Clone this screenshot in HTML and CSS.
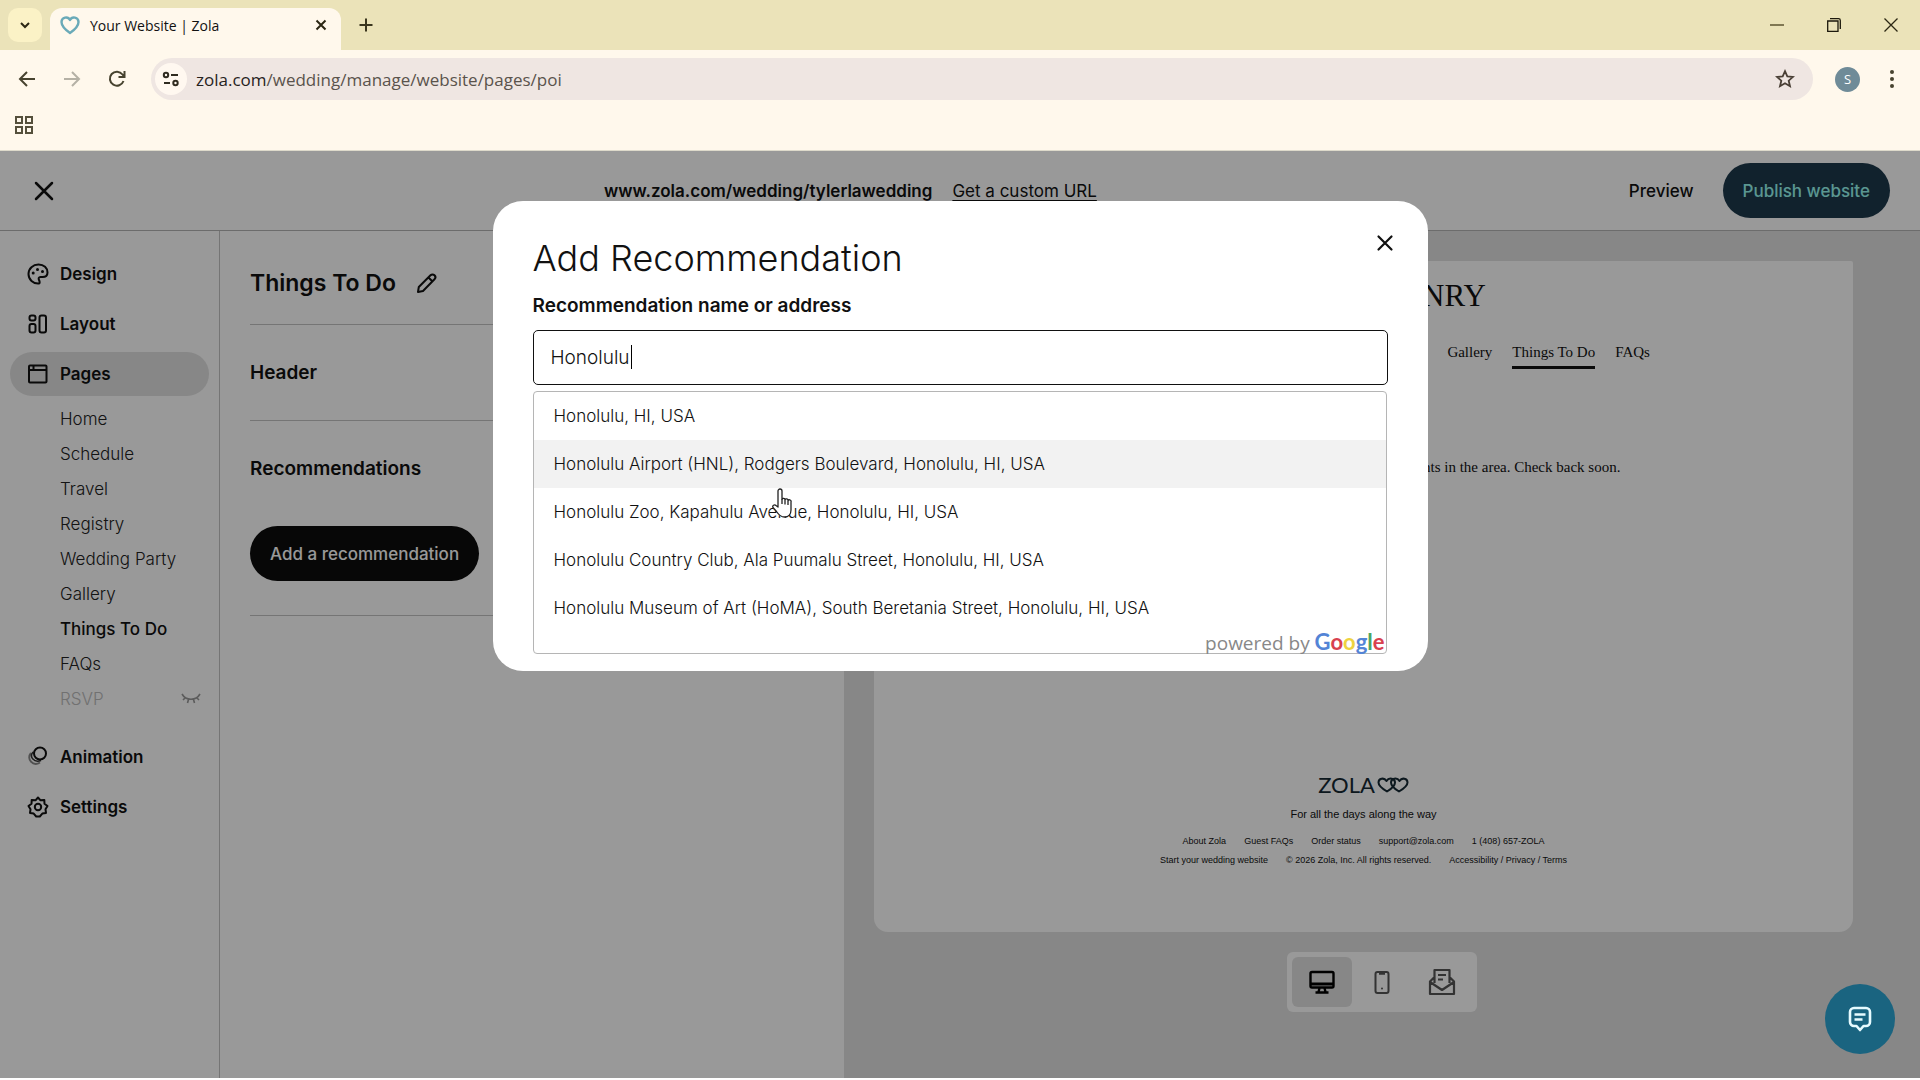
FILE: index.html
```html
<!DOCTYPE html>
<html lang="en">
<head>
    <meta charset="UTF-8">
    <meta name="viewport" content="width=device-width, initial-scale=1.0">
    <title>Your Website | Zola</title>
    <link rel="stylesheet" href="styles.css">
</head>
<body>
    <div class="browser">
        <div class="tab-strip">
            <button class="tab-search" aria-label="Search tabs">
                <svg width="12" height="12" viewBox="0 0 12 12"><path d="M2 4l4 4 4-4" fill="none" stroke="#2b2713" stroke-width="2"/></svg>
            </button>
            <div class="tab">
                <svg width="20" height="20" viewBox="0 0 20 20"><path d="M10 18C5 14.500 1.500 11 1.500 7a4.500 4.500 0 0 1 8.500-2 4.500 4.500 0 0 1 8.500 2c0 4-3.500 7.500-8.500 11z" fill="none" stroke="#6aaab8" stroke-width="2.400" stroke-linejoin="round"/></svg>
                <span class="tab-title">Your Website | Zola</span>
                <button class="icon-btn" aria-label="Close tab">
                    <svg width="12" height="12" viewBox="0 0 12 12"><path d="M1.500 1.500l9 9M10.500 1.500l-9 9" stroke="#2b2713" stroke-width="2"/></svg>
                </button>
            </div>
            <button class="icon-btn new-tab" aria-label="New tab">
                <svg width="14" height="14" viewBox="0 0 14 14"><path d="M7 0.500v13M0.500 7h13" stroke="#3b361e" stroke-width="2"/></svg>
            </button>
            <div class="window-buttons">
                <button class="icon-btn" aria-label="Minimize"><svg width="14" height="14" viewBox="0 0 14 14"><path d="M0 7h14" stroke="#5d5532" stroke-width="1.500"/></svg></button>
                <button class="icon-btn" aria-label="Restore"><svg width="14" height="14" viewBox="0 0 14 14"><path d="M0.700 3h10.300v10.300H0.700zM3 0.700h8.500a1.800 1.800 0 0 1 1.800 1.800V11" fill="none" stroke="#1c190c" stroke-width="1.300"/></svg></button>
                <button class="icon-btn" aria-label="Close window"><svg width="14" height="14" viewBox="0 0 14 14"><path d="M0.500 0.500l13 13M13.500 0.500l-13 13" stroke="#2b2713" stroke-width="1.300"/></svg></button>
            </div>
        </div>
        <div class="toolbar">
            <button class="icon-btn" aria-label="Back"><svg width="18" height="18" viewBox="0 0 18 18"><path d="M17 9H2M9 2L2 9l7 7" fill="none" stroke="#47432f" stroke-width="2"/></svg></button>
            <button class="icon-btn" aria-label="Forward"><svg width="18" height="18" viewBox="0 0 18 18"><path d="M1 9h15M9 2l7 7-7 7" fill="none" stroke="#b5b1a5" stroke-width="2"/></svg></button>
            <button class="icon-btn" aria-label="Reload"><svg width="18" height="18" viewBox="0 0 18 18"><path d="M15.500 11A7 7 0 1 1 14.500 4.500L16 6.500M16.500 1v6h-6" fill="none" stroke="#47432f" stroke-width="2"/></svg></button>
            <div class="address">
                <button class="site-info" aria-label="View site information">
                    <svg width="18" height="16" viewBox="0 0 18 16" fill="none" stroke="#2f2b20" stroke-width="2"><circle cx="4" cy="4" r="2.200"/><path d="M9 4h7M2 12h6"/><circle cx="13.500" cy="12" r="2.200"/></svg>
                </button>
                <span class="url"><span class="host">zola.com</span>/wedding/manage/website/pages/poi</span>
                <button class="icon-btn" aria-label="Bookmark this tab"><svg width="20" height="20" viewBox="0 0 20 20"><path d="M10 2.200l2.300 5.200 5.700.500-4.300 3.800 1.300 5.500-5-3-5 3 1.300-5.500L2 7.900l5.700-.500z" fill="none" stroke="#4a4036" stroke-width="1.800"/></svg></button>
            </div>
            <button class="avatar">S</button>
            <button class="icon-btn" aria-label="Browser menu"><svg width="6" height="20" viewBox="0 0 6 20" fill="#47432f"><circle cx="3" cy="3" r="2"/><circle cx="3" cy="10" r="2"/><circle cx="3" cy="17" r="2"/></svg></button>
        </div>
        <div class="bookmarks">
            <button class="icon-btn" aria-label="Apps"><svg width="20" height="20" viewBox="0 0 20 20" fill="none" stroke="#55503c" stroke-width="2"><path d="M2 2h6v6H2zM12 2h6v6h-6zM2 12h6v6H2zM12 12h6v6h-6z"/></svg></button>
        </div>
    </div>

    <div class="page">
        <header class="app-header">
            <button class="exit-btn" aria-label="Exit editor"><svg width="20" height="20" viewBox="0 0 20 20"><path d="M2 2l16 16M18 2L2 18" stroke="#111" stroke-width="2.500" stroke-linecap="round"/></svg></button>
            <div class="site-url">
                <strong>www.zola.com/wedding/tylerlawedding</strong>
                <a href="#">Get a custom URL</a>
            </div>
            <div class="header-actions">
                <button class="preview-btn">Preview</button>
                <button class="publish-btn">Publish website</button>
            </div>
        </header>

        <div class="workspace">
            <nav class="sidebar">
                <a class="nav-item" href="#">
                    <svg width="22" height="22" viewBox="0 0 22 22" fill="none" stroke="#111" stroke-width="2"><path d="M12 20.500C6 21 1.500 16.500 1.500 11S6 1.500 11.500 1.500 20.500 5 20.500 9.500c0 3.500-2.500 4.500-5 4.500h-2c-1.800 0-2.300 1.500-1.500 3s1 3.200 0 3.500z"/><g fill="#111" stroke="none"><circle cx="6.200" cy="10" r="1.500"/><circle cx="10.500" cy="6.500" r="1.500"/><circle cx="15.500" cy="8.500" r="1.500"/></g></svg>
                    Design
                </a>
                <a class="nav-item" href="#">
                    <svg width="22" height="22" viewBox="0 0 22 22" fill="none" stroke="#111" stroke-width="2"><rect x="2.500" y="2.500" width="6" height="5" rx="2"/><rect x="2.500" y="11" width="6" height="8.500" rx="2"/><rect x="12.500" y="2.500" width="6.500" height="17" rx="2"/></svg>
                    Layout
                </a>
                <a class="nav-item active" href="#">
                    <svg width="22" height="22" viewBox="0 0 22 22" fill="none" stroke="#111" stroke-width="2"><rect x="2" y="2.500" width="17.500" height="17" rx="1"/><path d="M2 7h17.500M6.500 3v4"/></svg>
                    Pages
                </a>
                <div class="sub-nav">
                    <a href="#">Home</a>
                    <a href="#">Schedule</a>
                    <a href="#">Travel</a>
                    <a href="#">Registry</a>
                    <a href="#">Wedding Party</a>
                    <a href="#">Gallery</a>
                    <a class="current" href="#">Things To Do</a>
                    <a href="#">FAQs</a>
                    <a class="hidden-page" href="#">RSVP
                        <svg width="20" height="14" viewBox="0 0 20 14" fill="none" stroke="#999" stroke-width="1.600"><path d="M1 2c4 7 14 7 18 0M2 8l2.500-2.500M7.500 7.500L6.500 11M12.500 7.500l1 3.500M18 8l-2.500-2.500"/></svg>
                    </a>
                </div>
                <a class="nav-item" href="#">
                    <svg width="22" height="22" viewBox="0 0 22 22" fill="none" stroke="#111" stroke-width="2"><path d="M4 7c-5 6 2 14 9 9.500" stroke="#888"/><path d="M6 6c-4 5 1 11 8 8.500" stroke="#333" stroke-width="1.500"/><circle cx="13" cy="7.500" r="6"/></svg>
                    Animation
                </a>
                <a class="nav-item" href="#">
                    <svg width="22" height="22" viewBox="0 0 22 22" fill="none" stroke="#111" stroke-width="2" stroke-linejoin="round"><path d="M11 1.500l2.500 2.800 3.800-.400.200 3.800 3 2.300-2 3.300.5 3.700-3.700.600L12.800 20.500H9.200L6.700 17.600 3 17l.500-3.700-2-3.300 3-2.300.200-3.800 3.800.400z"/><circle cx="11" cy="11" r="3.200"/></svg>
                    Settings
                </a>
            </nav>

            <main class="editor">
                <section class="title-section">
                    <h1>Things To Do
                        <button class="icon-btn" aria-label="Edit title"><svg width="22" height="22" viewBox="0 0 22 22" fill="none" stroke="#111" stroke-width="2" stroke-linejoin="round"><path d="M2 20l.8-5L14.500 3.300a2.800 2.800 0 0 1 4 4L7 19zM12.500 5.500l4 4"/></svg></button>
                    </h1>
                </section>
                <section>
                    <h2>Header</h2>
                </section>
                <section>
                    <h2>Recommendations</h2>
                    <button class="add-btn">Add a recommendation</button>
                </section>
            </main>

            <div class="preview">
                <div class="canvas">
                    <div class="couple">TYLER &amp; HENRY</div>
                    <nav class="site-nav">
                        <a href="#">Home</a>
                        <a href="#">Schedule</a>
                        <a href="#">Travel</a>
                        <a href="#">Registry</a>
                        <a href="#">Wedding Party</a>
                        <a href="#">Gallery</a>
                        <a class="current" href="#">Things To Do</a>
                        <a href="#">FAQs</a>
                    </nav>
                    <p class="empty-note">We're still adding favorite restaurants, sights and events in the area. Check back soon.</p>
                    <footer class="site-footer">
                        <div class="logo">ZOLA
                            <svg width="32" height="16" viewBox="0 0 32 16" fill="none" stroke="#152833" stroke-width="2" stroke-linejoin="round"><path d="M10 14.500C5 11.500 1.500 9 1.500 5.500c0-4 5.500-5.500 8-1.500 2.500-4 8.500-2.500 8.500 1.500 0 3.500-3 6-8 9z"/><path d="M22 14.500c-5-3-8-5.500-8-9 0-4 6-5.500 8.500-1.500 2.500-4 8-2.500 8 1.500 0 3.500-3.500 6-8.500 9z"/></svg>
                        </div>
                        <div class="tagline">For all the days along the way</div>
                        <div class="footer-links">
                            <a href="#">About Zola</a>
                            <a href="#">Guest FAQs</a>
                            <a href="#">Order status</a>
                            <a href="#">support@zola.com</a>
                            <span>1 (408) 657-ZOLA</span>
                        </div>
                        <div class="footer-links">
                            <a href="#">Start your wedding website</a>
                            <span>© 2026 Zola, Inc. All rights reserved.</span>
                            <span>Accessibility / Privacy / Terms</span>
                        </div>
                    </footer>
                </div>
                <div class="devices">
                    <button class="on" aria-label="Desktop"><svg width="28" height="28" viewBox="0 0 28 28" fill="none" stroke="#000" stroke-width="2.400"><rect x="2.500" y="4" width="23" height="15.500" rx="1.500"/><path d="M3 16h22" stroke-width="3"/><path d="M11.500 20l-1 4M16.500 20l1 4M7.500 24.500h13"/></svg></button>
                    <button aria-label="Mobile"><svg width="28" height="28" viewBox="0 0 28 28" fill="none" stroke="#555" stroke-width="2"><rect x="7.500" y="4" width="13" height="21" rx="2"/><path d="M11 5.500h6" stroke-width="2.500"/><circle cx="14" cy="20.500" r="1" fill="#555" stroke="none"/></svg></button>
                    <button aria-label="Invitation"><svg width="28" height="28" viewBox="0 0 28 28" fill="none" stroke="#555" stroke-width="2.200" stroke-linejoin="round"><path d="M6.500 15V2h15v13M6.500 9L2 13.500V26h24V13.500L21.500 9M2 14l12 8 12-8M10 7h8M10 11.500h5"/></svg></button>
                </div>
            </div>
        </div>

        <div class="overlay">
            <div class="modal" role="dialog" aria-labelledby="modalTitle">
                <button class="icon-btn modal-close" aria-label="Close"><svg width="18" height="18" viewBox="0 0 18 18"><path d="M2.500 2.500l13 13M15.500 2.500l-13 13" stroke="#111" stroke-width="2.200" stroke-linecap="round"/></svg></button>
                <h2 id="modalTitle">Add Recommendation</h2>
                <label for="place">Recommendation name or address</label>
                <div class="place-field">
                    <input type="text" id="place" value="Honolulu" autocomplete="off">
                    <span class="caret"></span>
                    <div class="suggestions">
                        <ul>
                            <li>Honolulu, HI, USA</li>
                            <li class="hover">Honolulu Airport (HNL), Rodgers Boulevard, Honolulu, HI, USA</li>
                            <li>Honolulu Zoo, Kapahulu Avenue, Honolulu, HI, USA</li>
                            <li>Honolulu Country Club, Ala Puumalu Street, Honolulu, HI, USA</li>
                            <li>Honolulu Museum of Art (HoMA), South Beretania Street, Honolulu, HI, USA</li>
                        </ul>
                        <div class="powered">powered by <span class="google"><span class="b">G</span><span class="r">o</span><span class="y">o</span><span class="b">g</span><span class="g">l</span><span class="r">e</span></span></div>
                        <svg class="pointer" width="20" height="30" viewBox="0 0 20 30" fill="#fff" stroke="#222" stroke-width="1.300" stroke-linejoin="round"><path d="M6 19V3a2 2 0 0 1 4 0v8a1.700 1.700 0 0 1 3 .500 1.700 1.700 0 0 1 3 1 1.700 1.700 0 0 1 3 1.500V22c0 4-2.500 7-6.500 7-4 0-6-2.500-8-5.500L1 19.500c-1-2 1.500-3.500 3-2z"/><path d="M10 11v5M13 12v4.500M16 13v4" fill="none"/></svg>
                    </div>
                </div>
            </div>
        </div>

        <button class="chat" aria-label="Chat with us"><svg width="24" height="28" viewBox="0 0 24 28" fill="none" stroke="#e6fbff" stroke-width="2.600" stroke-linejoin="round"><path d="M6 3h12a4 4 0 0 1 4 4v10a4 4 0 0 1-4 4h-2.500L12 25l-3.500-4H6a4 4 0 0 1-4-4V7a4 4 0 0 1 4-4z"/><path d="M6.500 9.500h11M6.500 14.500h8"/></svg></button>
    </div>
</body>
</html>
```

FILE: styles.css
```css
* {
    box-sizing: border-box;
}
body {
    margin: 0;
    height: 100vh;
    display: flex;
    flex-direction: column;
    padding-bottom: 2px;
    background-color: #fff;
    font-family: Inter, "Liberation Sans", sans-serif;
    font-size: 17px;
    color: #111;
}
button, input {
    font: inherit;
    color: inherit;
}
button {
    border: 0;
    padding: 0;
    background: none;
    cursor: pointer;
}
a {
    color: inherit;
    text-decoration: none;
}
h1, h2, p, ul {
    margin: 0;
    padding: 0;
}
svg {
    display: block;
    flex: none;
}

/* browser window */
.browser {
    font-family: "Open Sans", "Noto Sans", sans-serif;
    background-color: #fff8ec;
    height: 151px;
    border-bottom: 1px solid #dedacb;
}
.tab-strip {
    display: flex;
    align-items: flex-end;
    height: 50px;
    padding-left: 8px;
    background-color: #ebe3b9;
}
.tab-search {
    display: flex;
    align-items: center;
    justify-content: center;
    width: 34px;
    height: 34px;
    margin-bottom: 8px;
    border-radius: 10px;
    background-color: #fbf2c6;
}
.tab {
    display: flex;
    align-items: center;
    gap: 10px;
    width: 291px;
    height: 42px;
    margin-left: 8px;
    padding: 0 14px 8px 10px;
    border-radius: 12px 12px 0 0;
    background-color: #fff8ec;
}
.tab-title {
    flex: 1;
    font-size: 14px;
}
.new-tab {
    margin: 0 0 18px 18px;
}
.window-buttons {
    display: flex;
    gap: 43px;
    margin: 0 22px 18px auto;
}
.toolbar {
    display: flex;
    align-items: center;
    gap: 27px;
    height: 58px;
    padding: 0 25px 0 18px;
}
.address {
    flex: 1;
    display: flex;
    align-items: center;
    height: 42px;
    margin: 0 -5px 0 -2px;
    padding: 0 18px 0 4px;
    border-radius: 21px;
    background-color: #efe6e2;
}
.site-info {
    display: flex;
    align-items: center;
    justify-content: center;
    width: 32px;
    height: 32px;
    border-radius: 16px;
    background-color: #fff8f0;
}
.url {
    flex: 1;
    margin-left: 9px;
    font-size: 17px;
    color: #5a534c;
}
.host {
    color: #26221d;
}
.avatar {
    width: 25px;
    height: 25px;
    margin-right: 2px;
    border-radius: 50%;
    background-color: #6f8b98;
    color: #fff;
    font-size: 13px;
}
.bookmarks {
    padding: 7px 14px;
}

/* website editor */
.page {
    position: relative;
    flex: 1;
    display: flex;
    flex-direction: column;
    min-height: 0;
}
.app-header {
    display: flex;
    justify-content: space-between;
    align-items: center;
    height: 80px;
    padding: 0 30px 0 16px;
    border-bottom: 1px solid #b5b5b5;
}
.exit-btn {
    display: flex;
    justify-content: center;
    width: 56px;
}
.site-url {
    display: flex;
    gap: 20px;
}
.site-url strong, .nav-item {
    font-weight: 600;
}
.site-url a {
    text-decoration: underline;
    text-underline-offset: 3px;
}
.header-actions {
    display: flex;
    gap: 29px;
    font-weight: 500;
}
.publish-btn, .add-btn {
    height: 55px;
    padding: 0 20px;
    border-radius: 28px;
    font-weight: 500;
}
.publish-btn {
    background-color: #1d394c;
    color: #98fbf2;
}
.workspace {
    flex: 1;
    display: flex;
    min-height: 0;
}
.sidebar {
    width: 220px;
    padding: 21px 10px;
    border-right: 1px solid #c4c4c4;
}
.nav-item {
    display: flex;
    align-items: center;
    gap: 11px;
    height: 44px;
    margin-bottom: 6px;
    padding-left: 17px;
    border-radius: 22px;
}
.nav-item.active {
    background-color: #e2e2e2;
}
.sub-nav {
    margin-bottom: 18px;
    padding-left: 50px;
    font-weight: 300;
}
.sub-nav a {
    display: flex;
    align-items: center;
    height: 35px;
    padding-bottom: 2px;
    color: #222;
}
.sub-nav .current {
    font-weight: 500;
    color: #111;
}
.sub-nav .hidden-page {
    justify-content: space-between;
    padding-right: 8px;
    color: #bcbcbc;
}
.editor {
    width: 624px;
    padding: 0 30px;
}
.editor section {
    display: flex;
    flex-direction: column;
    align-items: flex-start;
    padding: 34px 0;
    border-bottom: 1px solid #c4c4c4;
}
.editor .title-section {
    padding: 39px 0 28px;
}
.editor h1 {
    display: flex;
    align-items: center;
    gap: 20px;
    font-size: 23px;
    font-weight: 600;
    line-height: 26px;
}
.editor h2 {
    font-size: 19px;
    font-weight: 600;
    line-height: 27px;
}
.add-btn {
    margin-top: 44px;
    background-color: #0c0c0c;
    color: #fff;
}
.preview {
    flex: 1;
    display: flex;
    flex-direction: column;
    align-items: center;
    gap: 20px;
    padding: 30px 0 66px;
    background-color: #e2e2e2;
}
.canvas {
    flex: 1;
    align-self: stretch;
    display: flex;
    flex-direction: column;
    align-items: center;
    margin: 0 67px 0 30px;
    padding: 17px 0 62px;
    border-radius: 2px 2px 14px 14px;
    background-color: #fff;
    font-family: "Liberation Serif", serif;
    font-size: 15px;
}
.couple {
    font-size: 31px;
    line-height: 36px;
}
.site-nav {
    display: flex;
    gap: 20px;
    margin-top: 27px;
}
.site-nav a {
    height: 28px;
    line-height: 22px;
}
.site-nav .current {
    border-bottom: 3px solid #111;
}
.empty-note {
    margin-top: 87px;
    line-height: 22px;
}
.site-footer {
    display: flex;
    flex-direction: column;
    align-items: center;
    margin-top: auto;
    font-family: "Liberation Sans", sans-serif;
}
.logo {
    display: flex;
    align-items: center;
    gap: 2px;
    color: #152833;
    font-family: Lato, sans-serif;
    font-size: 22px;
    line-height: 24px;
}
.tagline {
    margin: 8px 0 9px;
    font-size: 11px;
    line-height: 18px;
}
.footer-links {
    display: flex;
    gap: 18px;
    font-size: 9px;
    line-height: 19px;
}
.devices {
    display: flex;
    padding: 5px;
    border-radius: 6px;
    background-color: #fff;
}
.devices button {
    display: flex;
    align-items: center;
    justify-content: center;
    width: 60px;
    height: 50px;
    border-radius: 6px;
}
.devices .on {
    background-color: #e2e2e2;
}

/* add recommendation dialog */
.overlay {
    position: absolute;
    inset: 0;
    display: flex;
    justify-content: center;
    align-items: flex-start;
    padding-top: 50px;
    background-color: rgba(0, 0, 0, 0.4);
}
.modal {
    position: relative;
    width: 935px;
    min-height: 470px;
    padding: 33px 40px 40px;
    border-radius: 30px;
    background-color: #fff;
}
.modal h2 {
    font-size: 36px;
    font-weight: 300;
    line-height: 48px;
    color: #111;
}
.modal label {
    display: block;
    margin: 12px 0;
    font-size: 19px;
    font-weight: 600;
    line-height: 24px;
}
.modal-close {
    position: absolute;
    top: 33px;
    right: 34px;
}
.place-field {
    position: relative;
}
.place-field input {
    display: block;
    width: 100%;
    height: 55px;
    padding: 0 17px;
    border: 1px solid #111;
    border-radius: 5px;
    font-size: 19px;
    font-weight: 300;
    color: #111;
}
.caret {
    position: absolute;
    top: 15px;
    left: 98px;
    width: 1px;
    height: 24px;
    background-color: #000;
}
.suggestions {
    position: absolute;
    top: 61px;
    left: 0;
    right: 1px;
    border: 1px solid #b5b5b5;
    border-radius: 4px;
    background-color: #fff;
}
.suggestions ul {
    list-style: none;
}
.suggestions li {
    padding: 0 20px;
    font-weight: 300;
    line-height: 48px;
    color: #111;
}
.suggestions .hover {
    background-color: #f2f2f2;
}
.powered {
    padding-right: 1px;
    font-family: "Open Sans", sans-serif;
    font-size: 19px;
    line-height: 20px;
    text-align: right;
    color: #888;
}
.google {
    font-family: Lato, sans-serif;
    font-weight: 700;
    font-size: 22px;
}
.google .b {
    color: #5384d6;
}
.google .r {
    color: #d8414f;
}
.google .y {
    color: #eed33f;
}
.google .g {
    color: #4aa564;
}
.pointer {
    position: absolute;
    top: 96px;
    left: 238px;
}
.chat {
    position: absolute;
    right: 25px;
    bottom: 24px;
    display: flex;
    align-items: center;
    justify-content: center;
    width: 70px;
    height: 70px;
    border-radius: 50%;
    background-color: #1a6480;
}
```
